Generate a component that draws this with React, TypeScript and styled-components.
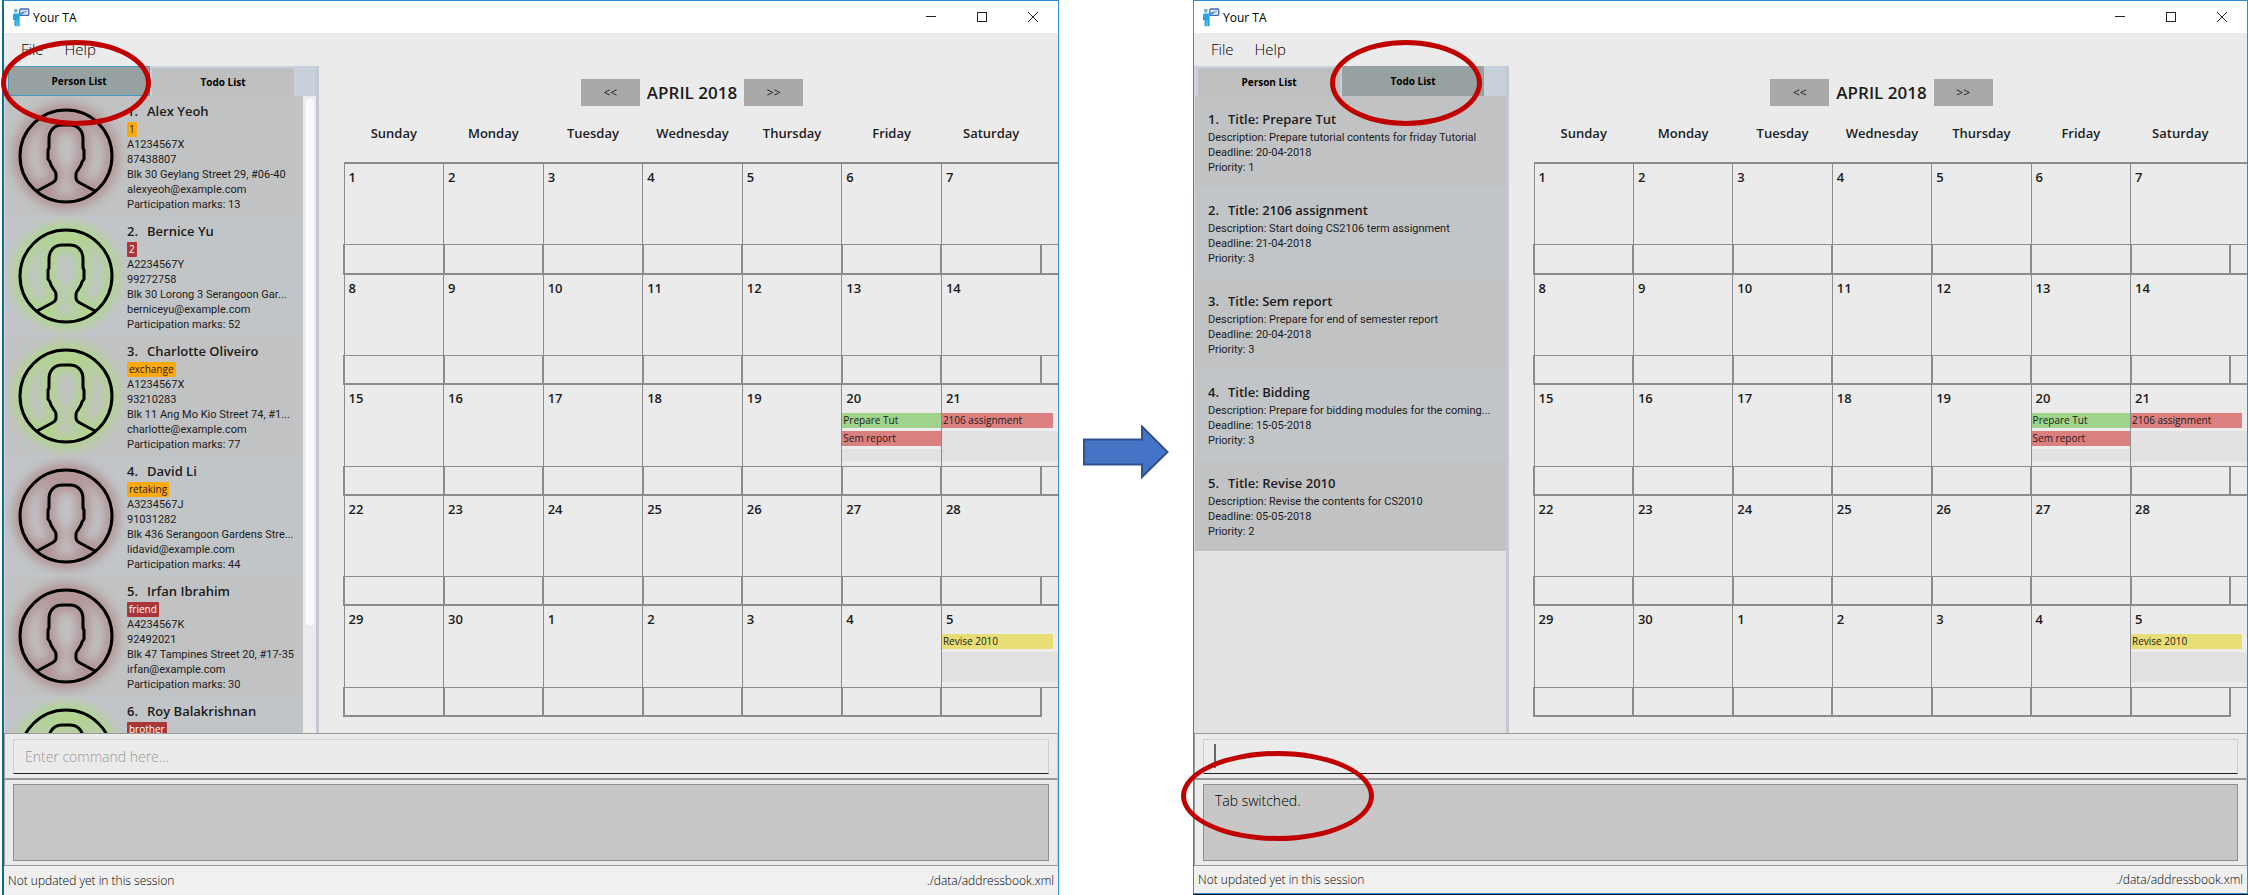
import React from "react";
import styled, { createGlobalStyle, css } from "styled-components";

/* ---------- data ---------- */

type Tone = "red" | "green";
type Priority = "low" | "mid" | "high";
type TabName = "person" | "todo";

interface Person {
  name: string;
  tag: string;
  tagTone: "orange" | "crimson";
  lines: string[];
  tone: Tone;
}

const persons: Person[] = [
  { name: "Alex Yeoh", tag: "1", tagTone: "orange", tone: "red", lines: ["A1234567X", "87438807", "Blk 30 Geylang Street 29, #06-40", "alexyeoh@example.com", "Participation marks: 13"] },
  { name: "Bernice Yu", tag: "2", tagTone: "crimson", tone: "green", lines: ["A2234567Y", "99272758", "Blk 30 Lorong 3 Serangoon Gar...", "berniceyu@example.com", "Participation marks: 52"] },
  { name: "Charlotte Oliveiro", tag: "exchange", tagTone: "orange", tone: "green", lines: ["A1234567X", "93210283", "Blk 11 Ang Mo Kio Street 74, #1...", "charlotte@example.com", "Participation marks: 77"] },
  { name: "David Li", tag: "retaking", tagTone: "orange", tone: "red", lines: ["A3234567J", "91031282", "Blk 436 Serangoon Gardens Stre...", "lidavid@example.com", "Participation marks: 44"] },
  { name: "Irfan Ibrahim", tag: "friend", tagTone: "crimson", tone: "red", lines: ["A4234567K", "92492021", "Blk 47 Tampines Street 20, #17-35", "irfan@example.com", "Participation marks: 30"] },
  { name: "Roy Balakrishnan", tag: "brother", tagTone: "crimson", tone: "green", lines: [] },
];

const todos = [
  { title: "Prepare Tut", description: "Prepare tutorial contents for friday Tutorial", deadline: "20-04-2018", priority: 1 },
  { title: "2106 assignment", description: "Start doing CS2106 term assignment", deadline: "21-04-2018", priority: 3 },
  { title: "Sem report", description: "Prepare for end of semester report", deadline: "20-04-2018", priority: 3 },
  { title: "Bidding", description: "Prepare for bidding modules for the coming...", deadline: "15-05-2018", priority: 3 },
  { title: "Revise 2010", description: "Revise the contents for CS2010", deadline: "05-05-2018", priority: 2 },
];

const weekdays = ["Sunday", "Monday", "Tuesday", "Wednesday", "Thursday", "Friday", "Saturday"];

const weeks = [
  [1, 2, 3, 4, 5, 6, 7],
  [8, 9, 10, 11, 12, 13, 14],
  [15, 16, 17, 18, 19, 20, 21],
  [22, 23, 24, 25, 26, 27, 28],
  [29, 30, 1, 2, 3, 4, 5],
];

const entries: Record<string, { text: string; priority: Priority }[]> = {
  "2-5": [{ text: "Prepare Tut", priority: "low" }, { text: "Sem report", priority: "high" }],
  "2-6": [{ text: "2106 assignment", priority: "high" }],
  "4-6": [{ text: "Revise 2010", priority: "mid" }],
};

/* ---------- styles ---------- */

const line = "#8c8c8c";
const priorityColor: Record<Priority, string> = { low: "#a0d38c", mid: "#e8de76", high: "#da8080" };
const glowColor: Record<Tone, string> = { red: "#ab7f7f", green: "#aadb75" };

const GlobalStyle = createGlobalStyle`
  *, *::before, *::after { box-sizing: border-box; }
  body {
    margin: 0;
    background: #fff;
    color: #1c1c1c;
    font-family: "Open Sans", "Noto Sans", sans-serif;
  }
  button, input { font: inherit; color: inherit; }
  ul, ol, p, h1, h2, h3 { margin: 0; padding: 0; list-style: none; }
`;

const Page = styled.div`
  display: grid;
  grid-template-columns: 1057fr 134px 1055fr;
  height: 100vh;
  min-height: 600px;
  padding-left: 2px;
`;

const Gap = styled.div`
  display: flex;
  align-items: center;
  justify-content: center;
  padding-top: 8px;
`;

const Window = styled.section<{ $framed: boolean }>`
  display: flex;
  flex-direction: column;
  min-width: 0;
  background: #ebebeb;
  border-top: 1px solid #2f8bd6;
  border-right: 1px solid #2f8bd6;
  border-left: ${p => (p.$framed ? "1px solid #2f8bd6" : "2px solid #0f6a94")};
  ${p => p.$framed && css`
    border-bottom: 1px solid #2f8bd6;
    box-shadow: 0 1px 0 #0c1c2a;
    margin-bottom: 1px;
  `}
`;

const TitleBar = styled.header`
  display: flex;
  align-items: center;
  flex: none;
  height: 32px;
  padding-left: 8px;
  background: #fff;
`;

const AppName = styled.h1`
  flex: 1;
  margin-left: 3px;
  color: #000;
  font-size: 12px;
  font-weight: 400;
`;

const WindowButton = styled.button`
  display: flex;
  align-items: center;
  justify-content: center;
  width: 51px;
  height: 32px;
  padding: 0;
  border: 0;
  background: none;
`;

const MenuBar = styled.nav`
  display: flex;
  flex: none;
  gap: 21px;
  height: 33px;
  padding: 0 0 2px 17px;
`;

const MenuItem = styled.button`
  padding: 0;
  border: 0;
  background: none;
  color: #000;
  font-size: 15px;
  font-weight: 300;
`;

const Main = styled.div`
  display: flex;
  flex: 1 1 0;
  min-height: 0;
`;

const Sidebar = styled.aside`
  display: flex;
  flex-direction: column;
  flex: none;
  width: 315px;
  border-right: 3px solid #c3c8d2;
  border-left: 1px solid #d5dae2;
`;

const TabList = styled.div`
  display: flex;
  align-items: flex-end;
  flex: none;
  gap: 2px;
  height: 30px;
  padding-left: 3px;
  background: #c8d0dc;
`;

const Tab = styled.button<{ $selected: boolean; $focused: boolean }>`
  position: relative;
  width: 142px;
  height: ${p => (p.$selected ? 30 : 28)}px;
  padding: 0;
  border: 0;
  border-radius: 2px 2px 0 0;
  background: ${p => (p.$selected ? "#98a1a1" : "#bfbfbf")};
  color: #000;
  font-size: 10px;
  font-weight: 700;
  ${p => p.$focused && css`
    outline: 1px solid #3a9dbd;
    outline-offset: -1px;
  `}
`;

const ListArea = styled.div`
  display: flex;
  flex: 1 1 0;
  min-height: 0;
  overflow: hidden;
  background: #e2e2e2;
`;

const List = styled.ol`
  flex: 1;
  min-width: 0;
`;

const stripe = css`
  background: #c1c2c3;
  &:nth-child(even) { background: #c1c5c8; }
`;

const ScrollTrack = styled.div`
  flex: none;
  width: 13px;
  padding: 3px 2px 0 3px;
  background: #ececec;
`;

const ScrollThumb = styled.div`
  height: 83%;
  border-radius: 3px;
  background: #fafafa;
`;

const PersonRow = styled.li`
  ${stripe}
  display: flex;
  height: 120px;
  padding: 4px 0 4px 12px;
  overflow: hidden;
`;

const AvatarBox = styled.div`
  flex: none;
  width: 110px;
  margin-top: 7px;
`;

const Avatar = styled.svg`
  display: block;
  overflow: visible;
`;

const Details = styled.div`
  min-width: 0;
`;

const CardTitle = styled.h3`
  display: flex;
  gap: 9px;
  font-size: 13px;
  font-weight: 600;
  line-height: 22px;
  white-space: nowrap;
`;

const Tag = styled.span<{ $tone: Person["tagTone"] }>`
  display: block;
  width: max-content;
  height: 15px;
  padding: 0 2px;
  border-radius: 1px;
  background: ${p => (p.$tone === "orange" ? "#fca90f" : "#aa3639")};
  color: ${p => (p.$tone === "orange" ? "#1c1c1c" : "#fff")};
  font-size: 10px;
  line-height: 15px;
`;

const Detail = styled.p`
  overflow: hidden;
  font-family: Roboto, "Open Sans", sans-serif;
  font-size: 11px;
  line-height: 15px;
  text-overflow: ellipsis;
  white-space: nowrap;
`;

const TodoRow = styled.li`
  ${stripe}
  height: 91px;
  padding: 12px 0 0 13px;
`;

const Calendar = styled.main`
  display: flex;
  flex: 1;
  flex-direction: column;
  min-width: 0;
  padding: 13px 0 16px 24px;
`;

const MonthBar = styled.div`
  display: flex;
  flex: none;
  align-items: center;
  justify-content: center;
  gap: 7px;
  padding-right: 17px;
`;

const MonthButton = styled.button`
  width: 59px;
  height: 27px;
  padding: 0;
  border: 0;
  background: #a9a9a9;
  font-size: 12px;
`;

const MonthName = styled.h2`
  font-size: 17px;
  font-weight: 600;
  line-height: 27px;
`;

const GridArea = styled.div`
  flex: 1 1 0;
  min-height: 0;
`;

const Grid = styled.table`
  width: 100%;
  height: 100%;
  border-collapse: collapse;
  table-layout: fixed;
`;

const SpillColumn = styled.col`
  width: 17px;
`;

const Weekday = styled.th`
  height: 57px;
  padding: 0 0 3px;
  font-size: 13px;
  font-weight: 600;
`;

const DayCell = styled.td<{ $spill: boolean }>`
  height: 80px;
  padding: 0;
  border: 1px solid ${line};
  border-top-width: 2px;
  ${p => p.$spill && css`border-right: 0;`}
  vertical-align: top;
`;

const DayNumber = styled.span`
  display: block;
  height: 28px;
  padding: 3px 0 0 4px;
  font-size: 13px;
  font-weight: 600;
  line-height: 20px;
`;

const EntryList = styled.ul`
  height: 48px;
  background: #e2e2e2;
`;

const Entry = styled.li<{ $priority: Priority; $spill: boolean }>`
  height: 18px;
  padding-right: ${p => (p.$spill ? 5 : 0)}px;
  background: #ededed;
  font-size: 10px;
  line-height: 15px;
  span {
    display: block;
    padding-left: 1px;
    background: ${p => priorityColor[p.$priority]};
  }
`;

const FootCell = styled.td`
  height: 28px;
  padding: 0;
  border: 2px solid ${line};
  border-top-width: 1px;
`;

const SpillCell = styled.td<{ $last: boolean }>`
  padding: 0;
  border-top: 1px solid ${line};
  border-bottom: ${p => (p.$last ? "0" : `1px solid ${line}`)};
`;

const CommandPane = styled.div`
  position: relative;
  flex: none;
  height: 46px;
  padding: 5px 8px 4px;
  border: 1px solid #999;
  border-right-color: #ccc;
`;

const CommandInput = styled.input`
  display: block;
  width: 100%;
  height: 35px;
  padding: 0 11px;
  border: 1px solid #cfcfcf;
  border-bottom: 1px solid #222;
  border-radius: 0;
  outline: 0;
  background: transparent;
  font-size: 14px;
  font-weight: 300;
  &::placeholder { color: #989898; opacity: 1; }
`;

const Caret = styled.span`
  position: absolute;
  top: 10px;
  left: 19px;
  width: 2px;
  height: 24px;
  background: #666;
`;

const ResultPane = styled.div`
  position: relative;
  flex: none;
  height: 87px;
  padding: 4px 8px;
  border: 1px solid #999;
  border-right-color: #ccc;
`;

const Result = styled.output`
  display: block;
  height: 77px;
  padding: 6px 11px;
  border: 1px solid #8f8f8f;
  background: #c7c7c7;
  color: #000;
  font-size: 14px;
  font-weight: 300;
  line-height: 20px;
`;

const StatusBar = styled.footer<{ $framed: boolean }>`
  display: flex;
  flex: none;
  align-items: center;
  justify-content: space-between;
  height: ${p => (p.$framed ? 27 : 29)}px;
  padding: 0 4px;
  background: #f0f0f0;
  color: #000;
  font-size: 12px;
  font-weight: 300;
`;

const Callout = styled.span<{ $area: "person" | "todo" | "result" }>`
  position: absolute;
  z-index: 2;
  inset: ${p =>
    p.$area === "person" ? "-26px -1px -30px -7px"
      : p.$area === "todo" ? "-26px 2px -30px -12px"
        : "-29px auto auto -14px"};
  ${p => p.$area === "result" && css`width: 193px; height: 90px;`}
  border: 5px solid #c00000;
  border-radius: 50%;
  pointer-events: none;
`;

/* ---------- drawings ---------- */

function Logo() {
  return (
    <svg width="18" height="19" viewBox="0 0 18 19" aria-hidden="true">
      <rect x="7.8" y="1" width="9" height="6.4" rx="1" fill="#dfe9fa" stroke="#4467c0" strokeWidth="1.3" />
      <circle cx="3.8" cy="2.8" r="2" fill="#6fb8df" />
      <path d="M1.2 6.2Q1.2 5.4 2 5.4H7L11.6 3.6L12.3 4.8L7.6 7.6V18.2H5.3V12.4H4.8V18.2H2.5V12H0.8Z" fill="#27a3dd" />
      <path d="M9.5 5.8L14.8 3" stroke="#4467c0" strokeWidth="0.8" />
    </svg>
  );
}

function Silhouette({ width, color }: { width: number; color: string }) {
  return (
    <g fill="none" stroke={color} strokeWidth={width} strokeLinejoin="round">
      <circle r="46" />
      <path d="M-29 35L-14 27Q-10 25 -10 22V18Q-10 16 -12 14L-15 9L-16 6L-18 3V-6L-17 -8V-17C-17 -26 -11 -31 -4 -31H4C11 -31 17 -26 17 -17V-8L18 -6V3L16 6L15 9L12 14Q10 16 10 18V22Q10 25 14 27L29 35" />
    </g>
  );
}

function PersonAvatar({ tone, id }: { tone: Tone; id: string }) {
  return (
    <Avatar width="98" height="98" viewBox="-49 -49 98 98" aria-hidden="true">
      <filter id={id} x="-30%" y="-30%" width="160%" height="160%">
        <feGaussianBlur stdDeviation="6" />
      </filter>
      <g filter={`url(#${id})`} opacity="0.8">
        <Silhouette width={12} color={glowColor[tone]} />
      </g>
      <Silhouette width={3} color="#000" />
    </Avatar>
  );
}

function Arrow() {
  return (
    <svg width="86" height="54" viewBox="0 0 86 54" role="img" aria-label="then">
      <path d="M1 14.500H59V1.500L84.500 27L59 52V39.500H1Z" fill="#4472c4" stroke="#2f528f" strokeWidth="2" />
    </svg>
  );
}

/* ---------- parts ---------- */

function WindowControls() {
  return (
    <>
      <WindowButton aria-label="Minimize">
        <svg width="12" height="12" stroke="#222" fill="none"><path d="M1 5.500H11" /></svg>
      </WindowButton>
      <WindowButton aria-label="Maximize">
        <svg width="12" height="12" stroke="#222" fill="none"><rect x="1.500" y="1.500" width="9" height="9" /></svg>
      </WindowButton>
      <WindowButton aria-label="Close">
        <svg width="12" height="12" stroke="#222" fill="none"><path d="M1 1L11 11M11 1L1 11" /></svg>
      </WindowButton>
    </>
  );
}

function PersonList() {
  return (
    <ListArea>
      <List>
        {persons.map((p, i) => (
          <PersonRow key={p.name}>
            <AvatarBox><PersonAvatar tone={p.tone} id={`glow-${i}`} /></AvatarBox>
            <Details>
              <CardTitle><span>{i + 1}.</span><span>{p.name}</span></CardTitle>
              <Tag $tone={p.tagTone}>{p.tag}</Tag>
              {p.lines.map(l => <Detail key={l}>{l}</Detail>)}
            </Details>
          </PersonRow>
        ))}
      </List>
      <ScrollTrack><ScrollThumb /></ScrollTrack>
    </ListArea>
  );
}

function TodoList() {
  return (
    <ListArea>
      <List>
        {todos.map((t, i) => (
          <TodoRow key={t.title}>
            <CardTitle><span>{i + 1}.</span><span>Title: {t.title}</span></CardTitle>
            <Detail>Description: {t.description}</Detail>
            <Detail>Deadline: {t.deadline}</Detail>
            <Detail>Priority: {t.priority}</Detail>
          </TodoRow>
        ))}
      </List>
    </ListArea>
  );
}

function MonthCalendar() {
  return (
    <Calendar>
      <MonthBar>
        <MonthButton aria-label="Previous month">&lt;&lt;</MonthButton>
        <MonthName>APRIL 2018</MonthName>
        <MonthButton aria-label="Next month">&gt;&gt;</MonthButton>
      </MonthBar>
      <GridArea>
        <Grid>
          <colgroup>
            {weekdays.map(d => <col key={d} />)}
            <SpillColumn />
          </colgroup>
          <thead>
            <tr>{weekdays.map(d => <Weekday key={d} scope="col">{d}</Weekday>)}</tr>
          </thead>
          <tbody>
            {weeks.map((week, w) => (
              <React.Fragment key={w}>
                <tr>
                  {week.map((day, d) => {
                    const spill = d === 6;
                    const list = entries[`${w}-${d}`];
                    return (
                      <DayCell key={d} colSpan={spill ? 2 : 1} $spill={spill}>
                        <DayNumber>{day}</DayNumber>
                        {list && (
                          <EntryList>
                            {list.map(e => (
                              <Entry key={e.text} $priority={e.priority} $spill={spill}><span>{e.text}</span></Entry>
                            ))}
                          </EntryList>
                        )}
                      </DayCell>
                    );
                  })}
                </tr>
                <tr>
                  {week.map((_, d) => <FootCell key={d} />)}
                  <SpillCell $last={w === weeks.length - 1} />
                </tr>
              </React.Fragment>
            ))}
          </tbody>
        </Grid>
      </GridArea>
    </Calendar>
  );
}

function AddressBook({ tab, framed, result }: { tab: TabName; framed: boolean; result: string }) {
  return (
    <Window $framed={framed}>
      <TitleBar>
        <Logo />
        <AppName>Your TA</AppName>
        <WindowControls />
      </TitleBar>
      <MenuBar>
        <MenuItem>File</MenuItem>
        <MenuItem>Help</MenuItem>
      </MenuBar>
      <Main>
        <Sidebar>
          <TabList role="tablist">
            <Tab role="tab" aria-selected={tab === "person"} $selected={tab === "person"} $focused={tab === "person"}>
              Person List
              {tab === "person" && <Callout $area="person" />}
            </Tab>
            <Tab role="tab" aria-selected={tab === "todo"} $selected={tab === "todo"} $focused={false}>
              Todo List
              {tab === "todo" && <Callout $area="todo" />}
            </Tab>
          </TabList>
          {tab === "person" ? <PersonList /> : <TodoList />}
        </Sidebar>
        <MonthCalendar />
      </Main>
      <CommandPane>
        <CommandInput aria-label="Command" placeholder={result ? "" : "Enter command here..."} />
        {result && <Caret />}
      </CommandPane>
      <ResultPane>
        <Result>{result}</Result>
        {result && <Callout $area="result" />}
      </ResultPane>
      <StatusBar $framed={framed}>
        <span>Not updated yet in this session</span>
        <span>./data/addressbook.xml</span>
      </StatusBar>
    </Window>
  );
}

export default function App() {
  return (
    <>
      <GlobalStyle />
      <Page>
        <AddressBook tab="person" framed={false} result="" />
        <Gap><Arrow /></Gap>
        <AddressBook tab="todo" framed result="Tab switched." />
      </Page>
    </>
  );
}
